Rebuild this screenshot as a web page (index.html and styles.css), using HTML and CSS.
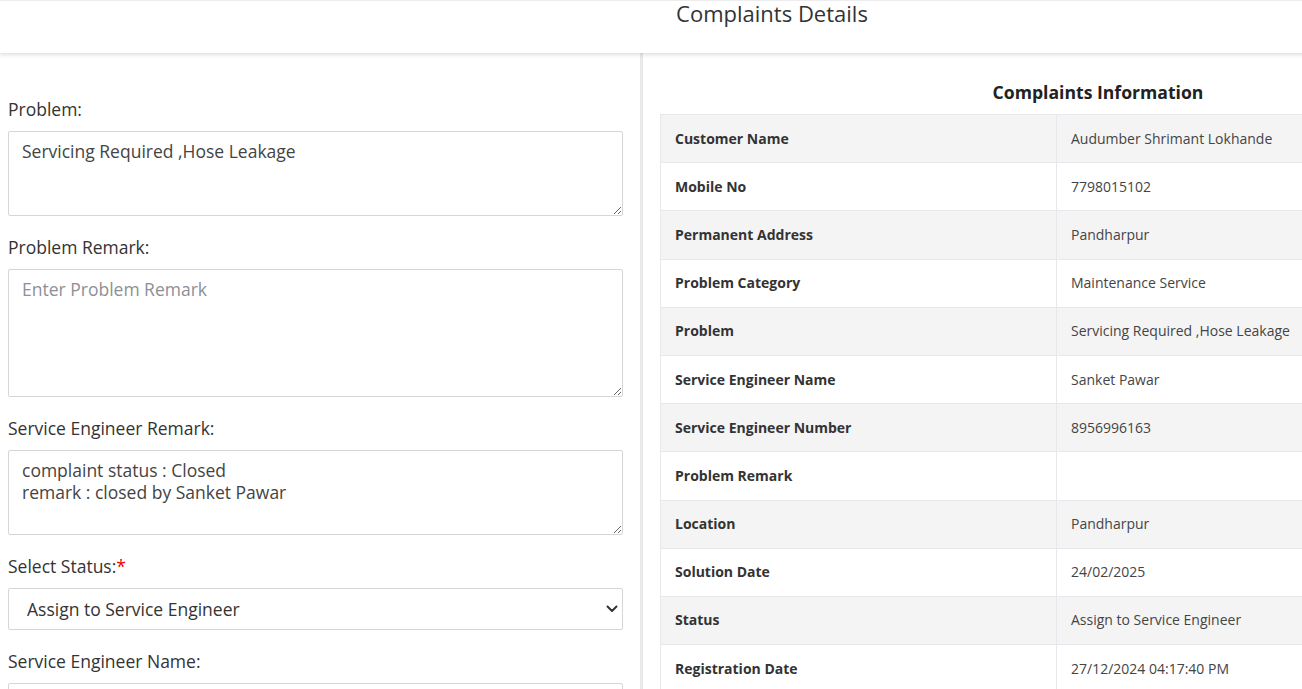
FILE: index.html
```html
<!DOCTYPE html>
<html lang="en">
<head>
<meta charset="utf-8">
<title>Complaints Details</title>
<link rel="stylesheet" href="styles.css">
</head>
<body>
<div class="page">
  <header class="topbar">
    <h1 class="title">Complaints Details</h1>
  </header>
  <main class="content">
    <section class="form-col">
      <div class="group">
        <label class="lbl">Problem:</label>
        <textarea class="field ta-short">Servicing Required ,Hose Leakage</textarea>
      </div>
      <div class="group">
        <label class="lbl">Problem Remark:</label>
        <textarea class="field ta-tall" placeholder="Enter Problem Remark"></textarea>
      </div>
      <div class="group">
        <label class="lbl">Service Engineer Remark:</label>
        <textarea class="field ta-short">complaint status : Closed
remark : closed by Sanket Pawar</textarea>
      </div>
      <div class="group">
        <label class="lbl">Select Status:<span class="req">*</span></label>
        <div class="select-wrap">
          <select class="field select">
            <option>Assign to Service Engineer</option>
          </select>
          <svg class="chev" width="12" height="8" viewBox="0 0 12 8"><path d="M1.5 1.5 L6 6 L10.5 1.5" fill="none" stroke="#333" stroke-width="2" stroke-linecap="round" stroke-linejoin="round"/></svg>
        </div>
      </div>
      <div class="group">
        <label class="lbl">Service Engineer Name:</label>
        <input class="field input" type="text">
      </div>
    </section>
    <section class="info-col">
      <h2 class="info-title">Complaints Information</h2>
      <table class="info">
        <tbody>
          <tr><th>Customer Name</th><td>Audumber Shrimant Lokhande</td></tr>
          <tr><th>Mobile No</th><td>7798015102</td></tr>
          <tr><th>Permanent Address</th><td>Pandharpur</td></tr>
          <tr><th>Problem Category</th><td>Maintenance Service</td></tr>
          <tr><th>Problem</th><td>Servicing Required ,Hose Leakage</td></tr>
          <tr><th>Service Engineer Name</th><td>Sanket Pawar</td></tr>
          <tr><th>Service Engineer Number</th><td>8956996163</td></tr>
          <tr><th>Problem Remark</th><td></td></tr>
          <tr><th>Location</th><td>Pandharpur</td></tr>
          <tr><th>Solution Date</th><td>24/02/2025</td></tr>
          <tr><th>Status</th><td>Assign to Service Engineer</td></tr>
          <tr><th>Registration Date</th><td>27/12/2024 04:17:40 PM</td></tr>
        </tbody>
      </table>
    </section>
  </main>
</div>
</body>
</html>
```

FILE: styles.css
```css
html, body {
  margin: 0;
  padding: 0;
  overflow: hidden;
  background: #fff;
}
body {
  font-family: "Open Sans", "Noto Sans", sans-serif;
  color: #333;
}
.page {
  width: 1544px;
}
.topbar {
  height: 52px;
  border-top: 1px solid #ececec;
  box-shadow: 0 2px 4px rgba(0, 0, 0, 0.13);
  position: relative;
  z-index: 1;
  background: #fff;
}
.title {
  margin: 0;
  font-size: 22px;
  font-weight: 400;
  line-height: 24px;
  text-align: center;
  color: #333;
}
.content {
  display: grid;
  grid-template-columns: 643px 901px;
}
.form-col {
  box-sizing: border-box;
  padding: 43px 17px 0 8px;
  border-right: 3px solid #e9e9e9;
  min-height: 700px;
}
.group {
  margin-bottom: 18px;
}
.lbl {
  display: block;
  font-size: 17.5px;
  line-height: 27px;
  margin-bottom: 8px;
  color: #333;
}
.req {
  color: #e00;
}
.field {
  display: block;
  box-sizing: border-box;
  width: 615px;
  font-family: "Open Sans", "Noto Sans", sans-serif;
  font-size: 17.5px;
  color: #444;
  border: 1px solid #d6d6d6;
  border-radius: 2px;
  background: #fff;
  margin: 0;
}
textarea.field {
  padding: 8px 13px;
  line-height: 22px;
  resize: vertical;
}
.ta-short {
  height: 85px;
}
.ta-tall {
  height: 128px;
}
textarea::placeholder {
  color: #8c9098;
}
.select-wrap {
  position: relative;
  width: 615px;
}
.select {
  appearance: none;
  -webkit-appearance: none;
  height: 42px;
  padding: 0 30px 0 18px;
  line-height: 40px;
  color: #333;
}
.chev {
  position: absolute;
  right: 5px;
  top: 17px;
}
.input {
  height: 42px;
  padding: 0 13px;
}
.info-col {
  padding: 27px 8px 0 17px;
}
.info-title {
  margin: 0 0 9px;
  font-size: 17.6px;
  font-weight: 700;
  line-height: 25px;
  text-align: center;
  color: #222;
}
.info {
  width: 876px;
  border-collapse: collapse;
  font-size: 14px;
  line-height: 20px;
}
.info th,
.info td {
  border: 1px solid #e6e8ec;
  padding: 13.6px 14px;
  text-align: left;
  vertical-align: middle;
}
.info th {
  width: 367px;
  font-weight: 700;
  color: #333;
}
.info td {
  color: #444;
}
.info tr:nth-child(odd) {
  background: #f4f4f4;
}
```
